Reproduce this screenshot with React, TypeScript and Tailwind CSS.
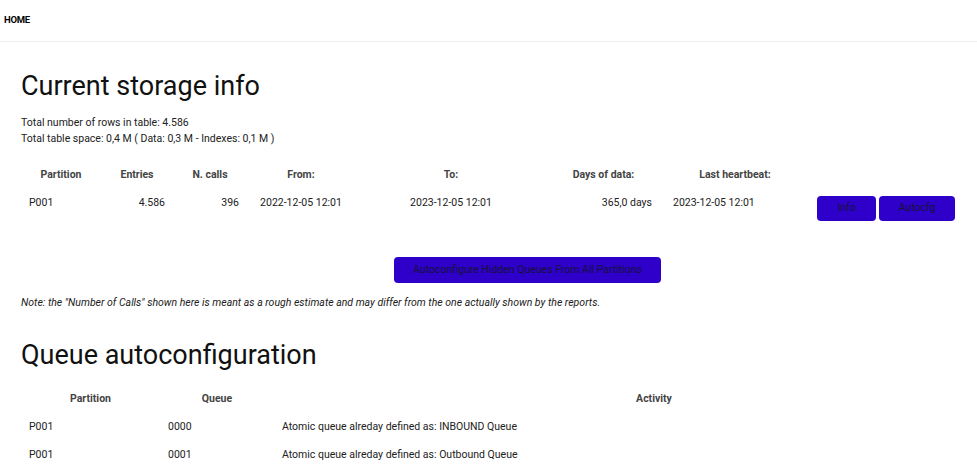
import React from "react";

const storageCols = [
  { label: "Partition", w: "w-[80px]" },
  { label: "Entries", w: "w-[72px]" },
  { label: "N. calls", w: "w-[74px]" },
  { label: "From:", w: "w-[108px]" },
  { label: "To:", w: "w-[192px]" },
  { label: "Days of data:", w: "w-[113px]" },
  { label: "Last heartbeat:", w: "w-[150px]" },
  { label: "", w: "w-[146px]" },
];

const queueRows = [
  { partition: "P001", queue: "0000", activity: "Atomic queue alreday defined as: INBOUND Queue" },
  { partition: "P001", queue: "0001", activity: "Atomic queue alreday defined as: Outbound Queue" },
];

const Btn = ({ children, className = "" }: { children: React.ReactNode; className?: string }) => (
  <button
    className={`h-[25px] rounded-[4px] bg-[#2f00c9] text-[10.5px] text-[#14123a] leading-none ${className}`}
  >
    {children}
  </button>
);

export default function App() {
  return (
    <div className="min-h-screen bg-white text-[#212121] font-['Roboto',sans-serif]">
      {/* top bar */}
      <div className="h-[42px] flex items-center px-[4px] border-b border-[#eeeeee]">
        <span className="text-[9.5px] font-bold text-black tracking-tight">HOME</span>
      </div>

      <div className="px-[21px]">
        <h1 className="mt-[28px] text-[27px] leading-[32px] font-normal text-[#111]">
          Current storage info
        </h1>

        <div className="mt-[13px] text-[10.5px] leading-[16px]">
          <p>Total number of rows in table: 4.586</p>
          <p>Total table space: 0,4 M ( Data: 0,3 M - Indexes: 0,1 M )</p>
        </div>

        {/* storage table */}
        <table className="mt-[14px] w-[935px] table-fixed border-collapse text-[10.5px]">
          <thead>
            <tr className="h-[28px]">
              {storageCols.map((c, i) => (
                <th key={i} className={`${c.w} font-bold text-[#444] text-center align-middle`}>
                  {c.label}
                </th>
              ))}
            </tr>
          </thead>
          <tbody>
            <tr className="align-top">
              <td className="pt-[6px] pl-[8px] leading-[16px] text-left">P001</td>
              <td className="pt-[6px] pr-[8px] leading-[16px] text-right">4.586</td>
              <td className="pt-[6px] pr-[8px] leading-[16px] text-right">396</td>
              <td className="pt-[6px] leading-[16px] text-center">2022-12-05 12:01</td>
              <td className="pt-[6px] leading-[16px] text-center">2023-12-05 12:01</td>
              <td className="pt-[6px] pr-[8px] leading-[16px] text-right">365,0 days</td>
              <td className="pt-[6px] pl-[13px] leading-[16px] text-left">2023-12-05 12:01</td>
              <td className="pt-[7px] pl-[7px]">
                <div className="flex gap-[3px]">
                  <Btn className="w-[59px]">Info</Btn>
                  <Btn className="w-[76px]">Autocfg</Btn>
                </div>
              </td>
            </tr>
          </tbody>
        </table>

        <div className="mt-[35px] pl-[373px]">
          <Btn className="w-[267px] h-[26px]">Autoconfigure Hidden Queues From All Partitions</Btn>
        </div>

        <p className="mt-[12px] text-[10.5px] leading-[16px] italic">
          Note: the "Number of Calls" shown here is meant as a rough estimate and may differ from the one actually shown by the reports.
        </p>

        <h2 className="mt-[28px] text-[27px] leading-[32px] font-normal text-[#111]">
          Queue autoconfiguration
        </h2>

        {/* queue table */}
        <table className="mt-[14px] w-[935px] table-fixed border-collapse text-[10.5px]">
          <thead>
            <tr className="h-[28px]">
              <th className="w-[139px] font-bold text-[#444] text-center">Partition</th>
              <th className="w-[114px] font-bold text-[#444] text-center">Queue</th>
              <th className="w-[682px] pl-[78px] font-bold text-[#444] text-center">Activity</th>
            </tr>
          </thead>
          <tbody>
            {queueRows.map((r, i) => (
              <tr key={i} className="h-[28px]">
                <td className="pl-[8px]">{r.partition}</td>
                <td className="pl-[8px]">{r.queue}</td>
                <td className="pl-[8px]">{r.activity}</td>
              </tr>
            ))}
          </tbody>
        </table>
      </div>
    </div>
  );
}
